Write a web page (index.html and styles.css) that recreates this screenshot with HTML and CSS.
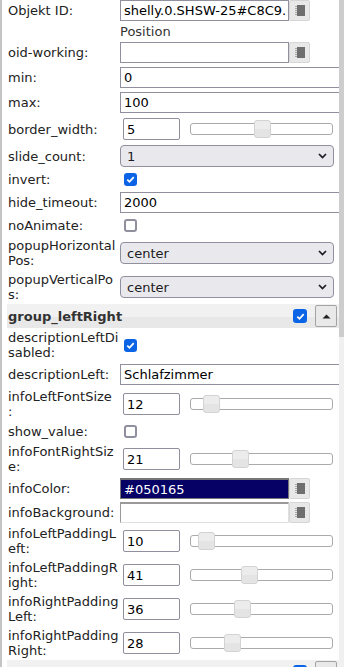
FILE: index.html
```html
<!DOCTYPE html>
<html lang="de">
<head>
<meta charset="utf-8">
<link rel="stylesheet" href="styles.css">
</head>
<body>
<div class="frame">
  <div class="edge"></div>
  <div class="panel">
    <div class="list">
      <div class="row">
        <div class="lbl">Objekt ID:</div>
        <div class="val combo">
          <input class="txt oid" type="text" value="shelly.0.SHSW-25#C8C9.">
          <button class="pick"><svg width="10" height="11" viewBox="0 0 10 11"><rect x="2" y="0" width="8" height="11" fill="#6e6e6e"/><path d="M0 1.5h2M0 3.5h2M0 5.5h2M0 7.5h2M0 9.5h2" stroke="#a8a8a8" stroke-width="1"/></svg></button>
        </div>
      </div>
      <div class="row caption-row">
        <div class="lbl"></div>
        <div class="val caption">Position</div>
      </div>
      <div class="row">
        <div class="lbl">oid-working:</div>
        <div class="val combo">
          <input class="txt oid" type="text" value="">
          <button class="pick"><svg width="10" height="11" viewBox="0 0 10 11"><rect x="2" y="0" width="8" height="11" fill="#6e6e6e"/><path d="M0 1.5h2M0 3.5h2M0 5.5h2M0 7.5h2M0 9.5h2" stroke="#a8a8a8" stroke-width="1"/></svg></button>
        </div>
      </div>
      <div class="row">
        <div class="lbl">min:</div>
        <div class="val"><input class="txt full" type="text" value="0"></div>
      </div>
      <div class="row">
        <div class="lbl">max:</div>
        <div class="val"><input class="txt full" type="text" value="100"></div>
      </div>
      <div class="row slide-row single">
        <div class="lbl">border_width:</div>
        <div class="val slider-cell">
          <input class="txt num" type="text" value="5">
          <div class="track"><span class="thumb" style="left:51%"></span></div>
        </div>
      </div>
      <div class="row">
        <div class="lbl">slide_count:</div>
        <div class="val"><div class="select"><span>1</span><svg width="9" height="6" viewBox="0 0 9 6"><path d="M1 1l3.5 3.5L8 1" fill="none" stroke="#1c1b22" stroke-width="1.7"/></svg></div></div>
      </div>
      <div class="row">
        <div class="lbl">invert:</div>
        <div class="val"><span class="cb on"><svg width="11" height="11" viewBox="0 0 11 11"><path d="M2.3 5.6l2.2 2.2 4.2-4.6" fill="none" stroke="#fff" stroke-width="1.8"/></svg></span></div>
      </div>
      <div class="row">
        <div class="lbl">hide_timeout:</div>
        <div class="val"><input class="txt full" type="text" value="2000"></div>
      </div>
      <div class="row">
        <div class="lbl">noAnimate:</div>
        <div class="val"><span class="cb"></span></div>
      </div>
      <div class="row">
        <div class="lbl">popupHorizontal<br>Pos:</div>
        <div class="val"><div class="select"><span>center</span><svg width="9" height="6" viewBox="0 0 9 6"><path d="M1 1l3.5 3.5L8 1" fill="none" stroke="#1c1b22" stroke-width="1.7"/></svg></div></div>
      </div>
      <div class="row">
        <div class="lbl">popupVerticalPo<br>s:</div>
        <div class="val"><div class="select"><span>center</span><svg width="9" height="6" viewBox="0 0 9 6"><path d="M1 1l3.5 3.5L8 1" fill="none" stroke="#1c1b22" stroke-width="1.7"/></svg></div></div>
      </div>

      <div class="group-head">
        <span class="group-title">group_leftRight</span>
        <span class="cb on big"><svg width="11" height="11" viewBox="0 0 11 11"><path d="M2.3 5.6l2.2 2.2 4.2-4.6" fill="none" stroke="#fff" stroke-width="1.8"/></svg></span>
        <button class="collapse"><svg width="9" height="5" viewBox="0 0 9 5"><path d="M0.5 4.5L4.5 0.5L8.5 4.5Z" fill="#222"/></svg></button>
      </div>

      <div class="row">
        <div class="lbl">descriptionLeftDi<br>sabled:</div>
        <div class="val"><span class="cb on"><svg width="11" height="11" viewBox="0 0 11 11"><path d="M2.3 5.6l2.2 2.2 4.2-4.6" fill="none" stroke="#fff" stroke-width="1.8"/></svg></span></div>
      </div>
      <div class="row">
        <div class="lbl">descriptionLeft:</div>
        <div class="val"><input class="txt full" type="text" value="Schlafzimmer"></div>
      </div>
      <div class="row slide-row">
        <div class="lbl">infoLeftFontSize<br>:</div>
        <div class="val slider-cell">
          <input class="txt num" type="text" value="12">
          <div class="track"><span class="thumb" style="left:14.5%"></span></div>
        </div>
      </div>
      <div class="row">
        <div class="lbl">show_value:</div>
        <div class="val"><span class="cb"></span></div>
      </div>
      <div class="row slide-row">
        <div class="lbl">infoFontRightSiz<br>e:</div>
        <div class="val slider-cell">
          <input class="txt num" type="text" value="21">
          <div class="track"><span class="thumb" style="left:35.1%"></span></div>
        </div>
      </div>
      <div class="row color-row">
        <div class="lbl">infoColor:</div>
        <div class="val combo">
          <input class="txt oid colored" type="text" value="#050165">
          <button class="pick"><svg width="10" height="11" viewBox="0 0 10 11"><rect x="2" y="0" width="8" height="11" fill="#6e6e6e"/><path d="M0 1.5h2M0 3.5h2M0 5.5h2M0 7.5h2M0 9.5h2" stroke="#a8a8a8" stroke-width="1"/></svg></button>
        </div>
      </div>
      <div class="row color-row">
        <div class="lbl">infoBackground:</div>
        <div class="val combo">
          <input class="txt oid inset" type="text" value="">
          <button class="pick"><svg width="10" height="11" viewBox="0 0 10 11"><rect x="2" y="0" width="8" height="11" fill="#6e6e6e"/><path d="M0 1.5h2M0 3.5h2M0 5.5h2M0 7.5h2M0 9.5h2" stroke="#a8a8a8" stroke-width="1"/></svg></button>
        </div>
      </div>
      <div class="row slide-row">
        <div class="lbl">infoLeftPaddingL<br>eft:</div>
        <div class="val slider-cell">
          <input class="txt num" type="text" value="10">
          <div class="track"><span class="thumb" style="left:11%"></span></div>
        </div>
      </div>
      <div class="row slide-row">
        <div class="lbl">infoLeftPaddingR<br>ight:</div>
        <div class="val slider-cell">
          <input class="txt num" type="text" value="41">
          <div class="track"><span class="thumb" style="left:41.8%"></span></div>
        </div>
      </div>
      <div class="row slide-row">
        <div class="lbl">infoRightPadding<br>Left:</div>
        <div class="val slider-cell">
          <input class="txt num" type="text" value="36">
          <div class="track"><span class="thumb" style="left:36.5%"></span></div>
        </div>
      </div>
      <div class="row slide-row">
        <div class="lbl">infoRightPadding<br>Right:</div>
        <div class="val slider-cell">
          <input class="txt num" type="text" value="28">
          <div class="track"><span class="thumb" style="left:29.1%"></span></div>
        </div>
      </div>

      <div class="group-head">
        <span class="group-title"></span>
        <span class="cb on big"><svg width="11" height="11" viewBox="0 0 11 11"><path d="M2.3 5.6l2.2 2.2 4.2-4.6" fill="none" stroke="#fff" stroke-width="1.8"/></svg></span>
        <button class="collapse"><svg width="9" height="5" viewBox="0 0 9 5"><path d="M0.5 4.5L4.5 0.5L8.5 4.5Z" fill="#222"/></svg></button>
      </div>
    </div>
  </div>
  <div class="scroll"><div class="scroll-thumb"></div></div>
</div>
</body>
</html>
```

FILE: styles.css
```css
* { box-sizing: border-box; }
html, body { margin: 0; padding: 0; background: #fff; }
body {
  font-family: "DejaVu Sans", Verdana, sans-serif;
  font-size: 13px;
  line-height: 15px;
  color: #222;
}
.frame {
  display: flex;
  height: 667px;
  overflow: hidden;
}
.edge { width: 2px; flex: none; background: #c4c4c4; }
.panel { width: 337px; flex: none; overflow: hidden; }
.scroll { width: 5px; flex: none; background: #f0f0f0; }
.scroll-thumb { height: 337px; background: #cdcdcd; }

.list { margin-top: -2px; }

.row {
  display: grid;
  grid-template-columns: 118px 1fr;
  align-items: center;
  padding: 2px 0;
}
.slide-row { padding: 2px 0; }
.slide-row.single { padding: 3px 0; }
.color-row { padding: 2px 0 1px; }
.caption-row { padding: 0 0 1px; }
.lbl { padding-left: 6px; white-space: nowrap; }
.val { display: flex; align-items: center; min-width: 0; }
.caption { color: #333; padding-top: 1px; }

.txt {
  font: inherit;
  color: #000;
  height: 21px;
  margin: 0;
  padding: 0 3px;
  border: 1px solid #8f8f9d;
  border-radius: 0;
  background: #fff;
  outline: none;
}
.full { width: calc(100% + 2px); flex: none; }
.oid { width: 169px; flex: none; }
.num { width: 57px; height: 22px; margin-left: 3px; flex: none; border-radius: 2px; }
.colored { background: #050165; color: #fff; border-color: #777; border-top-width: 2px; }
.inset { border-top: 2px solid #9a9a9a; border-left: 1px solid #9a9a9a; border-right: 1px solid #e0e0e0; border-bottom: 1px solid #e0e0e0; }

.pick {
  width: 21px;
  height: 21px;
  flex: none;
  margin: 0;
  padding: 0;
  border: 1px solid #d6d6d6;
  border-radius: 2px;
  background: #e8e8e8;
  display: flex;
  align-items: center;
  justify-content: center;
}

.slider-cell { gap: 10px; }
.track {
  position: relative;
  width: 143px;
  height: 12px;
  flex: none;
  border: 1px solid #aaa;
  border-radius: 3px;
  background: #fff;
}
.thumb {
  position: absolute;
  top: -4px;
  width: 17px;
  height: 18px;
  margin-left: -8.5px;
  border: 1px solid #d3d3d3;
  border-radius: 3px;
  background: linear-gradient(#ececec 0 50%, #e4e4e4 50% 100%);
}

.select {
  width: 214px;
  height: 22px;
  display: flex;
  align-items: center;
  justify-content: space-between;
  padding: 0 6px 0 6px;
  border: 1px solid #8f8f9d;
  border-radius: 4px;
  background: #e9e9ed;
  color: #1c1b22;
}

.cb {
  width: 13px;
  height: 13px;
  margin: 2px 0 2px 4px;
  border: 2px solid #8f8f9d;
  border-radius: 3px;
  background: #fff;
  display: inline-flex;
  align-items: center;
  justify-content: center;
}
.cb.on { border: none; background: #0b63e5; }
.cb.big { width: 14px; height: 14px; margin: 0; }

.group-head {
  display: flex;
  align-items: center;
  height: 24px;
  margin-left: 5px;
  padding: 0 2px 0 1px;
  background: linear-gradient(#f1f1f1 0 55%, #e8e8e8 55% 100%);
}
.group-title { flex: 1; font-weight: bold; color: #333; }
.collapse {
  width: 22px;
  height: 22px;
  margin: 0 0 0 8px;
  padding: 0;
  border: 1px solid #a3a3a3;
  border-radius: 2px;
  background: #e9e9e9;
  display: flex;
  align-items: center;
  justify-content: center;
}
```
